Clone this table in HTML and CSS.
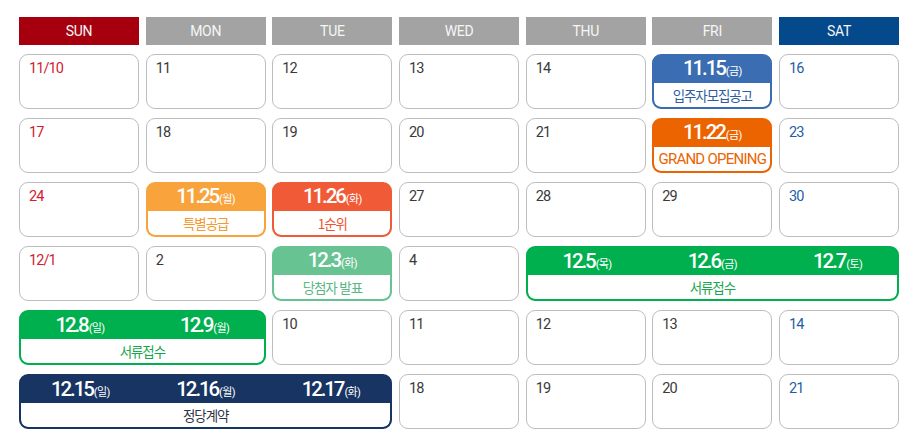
FILE: index.html
```html
<!DOCTYPE html>
<html lang="ko">
<head>
<meta charset="utf-8">
<title>Calendar</title>
<link rel="stylesheet" href="styles.css">
</head>
<body>
<div class="cal">
  <div class="hd sun">SUN</div>
  <div class="hd">MON</div>
  <div class="hd">TUE</div>
  <div class="hd">WED</div>
  <div class="hd">THU</div>
  <div class="hd">FRI</div>
  <div class="hd sat">SAT</div>

  <div class="day red">11/10</div>
  <div class="day">11</div>
  <div class="day">12</div>
  <div class="day">13</div>
  <div class="day">14</div>
  <div class="ev blue"><div class="ev-top"><span class="d">11.15<small>(금)</small></span></div><div class="ev-bot">입주자모집공고</div></div>
  <div class="day sblue">16</div>

  <div class="day red">17</div>
  <div class="day">18</div>
  <div class="day">19</div>
  <div class="day">20</div>
  <div class="day">21</div>
  <div class="ev orange"><div class="ev-top"><span class="d">11.22<small>(금)</small></span></div><div class="ev-bot en">GRAND OPENING</div></div>
  <div class="day sblue">23</div>

  <div class="day red">24</div>
  <div class="ev lorange"><div class="ev-top"><span class="d">11.25<small>(월)</small></span></div><div class="ev-bot">특별공급</div></div>
  <div class="ev tomato"><div class="ev-top"><span class="d">11.26<small>(화)</small></span></div><div class="ev-bot">1순위</div></div>
  <div class="day">27</div>
  <div class="day">28</div>
  <div class="day">29</div>
  <div class="day sblue">30</div>

  <div class="day red">12/1</div>
  <div class="day">2</div>
  <div class="ev lgreen"><div class="ev-top"><span class="d">12.3<small>(화)</small></span></div><div class="ev-bot">당첨자 발표</div></div>
  <div class="day">4</div>
  <div class="ev green span3"><div class="ev-top cols3"><span class="d">12.5<small>(목)</small></span><span class="d">12.6<small>(금)</small></span><span class="d">12.7<small>(토)</small></span></div><div class="ev-bot">서류접수</div></div>

  <div class="ev green span2"><div class="ev-top cols2"><span class="d">12.8<small>(일)</small></span><span class="d">12.9<small>(월)</small></span></div><div class="ev-bot">서류접수</div></div>
  <div class="day">10</div>
  <div class="day">11</div>
  <div class="day">12</div>
  <div class="day">13</div>
  <div class="day sblue">14</div>

  <div class="ev navy span3"><div class="ev-top cols3"><span class="d">12.15<small>(일)</small></span><span class="d">12.16<small>(월)</small></span><span class="d">12.17<small>(화)</small></span></div><div class="ev-bot">정당계약</div></div>
  <div class="day">18</div>
  <div class="day">19</div>
  <div class="day">20</div>
  <div class="day sblue">21</div>
</div>
</body>
</html>
```

FILE: styles.css
```css
* { box-sizing: border-box; }
html, body { margin: 0; padding: 0; background: #fff; }
body {
  font-family: Roboto, "Noto Sans CJK KR", sans-serif;
  color: #444;
}
.cal {
  display: grid;
  grid-template-columns: repeat(7, 1fr);
  grid-template-rows: 28px repeat(6, 55px);
  column-gap: 6.67px;
  row-gap: 9px;
  width: 880px;
  margin: 17px 0 0 19px;
}
.hd {
  background: #a3a3a3;
  color: #f6f6f6;
  font-size: 14px;
  letter-spacing: -0.3px;
  display: flex;
  align-items: center;
  justify-content: center;
  height: 28px;
}
.hd.sun { background: #a6000f; }
.hd.sat { background: #03498b; }

.day {
  border: 1px solid #bdbdbd;
  border-radius: 9px;
  padding: 6px 0 0 9px;
  font-size: 14.5px;
  line-height: 16px;
  letter-spacing: -0.9px;
  color: #3a3a3a;
}
.day.red { color: #d1212f; }
.day.sblue { color: #1f5ea6; }

.ev {
  border: 2px solid var(--c);
  border-radius: 9px;
  background: var(--c);
  display: flex;
  flex-direction: column;
  overflow: hidden;
}
.ev-top {
  height: 27px;
  display: flex;
  align-items: center;
  justify-content: center;
  color: #fff;
}
.ev-top.cols3, .ev-top.cols2 {
  display: grid;
  align-items: center;
  justify-items: center;
  column-gap: 6.67px;
}
.ev-top.cols3 { grid-template-columns: repeat(3, 1fr); }
.ev-top.cols2 { grid-template-columns: repeat(2, 1fr); }
.d {
  font-size: 20.5px;
  font-weight: 500;
  letter-spacing: -2.1px;
  line-height: 24px;
  padding-top: 1px;
}
.d small {
  font-size: 11px;
  font-weight: 400;
  letter-spacing: -0.6px;
  margin-left: 1px;
}
.ev-bot {
  flex: 1;
  background: #fff;
  border-radius: 0 0 7px 7px;
  display: flex;
  align-items: center;
  justify-content: center;
  color: var(--t);
  font-family: "Noto Sans CJK KR", sans-serif;
  font-size: 13.5px;
  letter-spacing: -1.1px;
  padding-bottom: 1px;
}
.ev-bot.en {
  font-family: Roboto, sans-serif;
  font-size: 15px;
  letter-spacing: -0.75px;
}
.span3 { grid-column: span 3; }
.span2 { grid-column: span 2; }

.blue { --c: #3a6db2; --t: #2d5f9f; }
.orange { --c: #ec6400; --t: #ec6400; }
.lorange { --c: #f8a33b; --t: #f39a33; }
.tomato { --c: #f15a36; --t: #ee5431; }
.lgreen { --c: #67c392; --t: #57b885; }
.green { --c: #00b04f; --t: #1aa64d; }
.navy { --c: #173462; --t: #2f3445; }
```
